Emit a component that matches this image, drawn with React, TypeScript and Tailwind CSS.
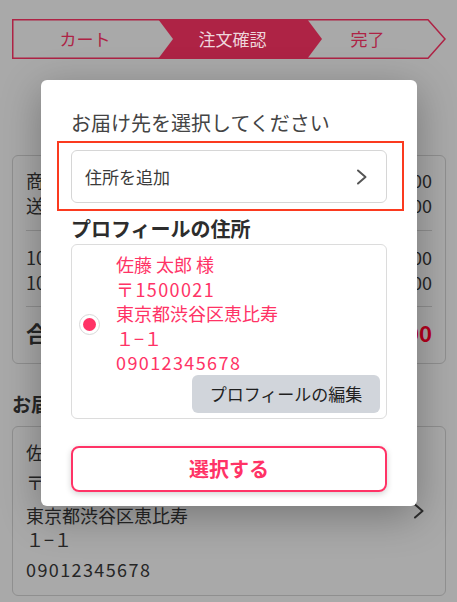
import React from 'react';

const Chevron = ({ className }: { className?: string }) => (
  <svg className={className} width="12" height="16" viewBox="0 0 12 16" fill="none">
    <polyline points="2,1.5 9.5,8 2,14.5" stroke="currentColor" strokeWidth="2" strokeLinecap="round" strokeLinejoin="round" />
  </svg>
);

function Stepper() {
  return (
    <div className="relative h-10 w-[434px]">
      <svg className="absolute inset-0" width="434" height="40" viewBox="0 0 434 40">
        <polygon points="0.75,0.75 416,0.75 433,20 416,39.25 0.75,39.25" fill="none" stroke="#ae2345" strokeWidth="1.5" />
        <polygon points="146,0 295,0 310,20 295,40 146,40 161,20" fill="#ae2345" />
      </svg>
      <div className="relative flex h-full text-[17px]">
        <div className="flex w-[146px] items-center justify-center text-[#ae2345]">カート</div>
        <div className="flex w-[149px] items-center justify-center text-[#eed6dc]">注文確認</div>
        <div className="flex w-[121px] items-center justify-center text-[#ae2345]">完了</div>
      </div>
    </div>
  );
}

function Row({ label, value }: { label: string; value: string }) {
  return (
    <div className="flex justify-between leading-[25px]">
      <span>{label}</span>
      <span>{value}</span>
    </div>
  );
}

export default function App() {
  return (
    <div className="relative h-[602px] w-[457px] overflow-hidden bg-[#a9a9a9] pl-3 pr-[11px] pt-[19px] font-['Noto_Sans_CJK_JP','Noto_Sans',sans-serif] text-[18px] text-[#262626]">
      <Stepper />

      {/* Order summary */}
      <div className="mt-[96px] rounded-md border border-[#8f8f8f] px-[13px] pb-4 pt-3">
        <Row label="商品小計" value="¥3,000" />
        <Row label="送料" value="¥1,000" />
        <div className="mt-3 h-px bg-[#8f8f8f]" />
        <div className="pt-[14px]">
          <Row label="10%対象" value="¥4,000" />
          <Row label="10%消費税" value="¥400" />
        </div>
        <div className="mt-[11px] h-px bg-[#8f8f8f]" />
        <div className="flex justify-between pt-[10px] text-[22px] font-bold leading-[30px]">
          <span>合計</span>
          <span className="text-[#b5001c]">¥4,400</span>
        </div>
      </div>

      <h2 className="mt-[27px] text-[19px] font-bold leading-[26px]">お届け先</h2>

      {/* Delivery address */}
      <div className="mt-[9px] flex items-center justify-between rounded-md border border-[#8f8f8f] pb-[14px] pl-[13px] pr-5 pt-[13px]">
        <div>
          <p className="leading-6">佐藤 太郎 様</p>
          <p className="mt-[6px] leading-6 tracking-[1.4px]">〒1500021</p>
          <p className="mt-[9px] leading-6">東京都渋谷区恵比寿</p>
          <p className="leading-6">１−１</p>
          <p className="mt-[6px] leading-6 tracking-[1.4px]">09012345678</p>
        </div>
        <Chevron className="text-[#2e2e2e]" />
      </div>

      {/* Modal */}
      <div className="absolute left-[41px] top-[80px] w-[376px] rounded-md bg-white px-[30px] pb-[14px] pt-[30px] shadow-[0_10px_40px_rgba(0,0,0,0.3)]">
        <p className="text-[20px] leading-[26px] text-[#444]">お届け先を選択してください</p>

        <button className="mt-[14px] flex h-[53px] w-full items-center justify-between rounded-md border border-[#d6d6d6] pl-[13px] pr-[18px] text-[17px] text-[#3a3a3a]">
          <span>住所を追加</span>
          <Chevron className="text-[#555]" />
        </button>

        <h3 className="mt-[13px] text-[20px] font-bold leading-[26px] text-[#2d2d2d]">プロフィールの住所</h3>

        <div className="mt-[2px] rounded-md border border-[#dcdcdc] pb-[5px] pl-[7px] pr-[6px] pt-[7px]">
          <div className="flex">
            <div className="mt-[62px] flex h-[21px] w-[21px] shrink-0 items-center justify-center rounded-full border border-[#d8d8d8]">
              <div className="h-[13px] w-[13px] rounded-full bg-[#ff3366]" />
            </div>
            <div className="ml-[16px] text-[18px] leading-[24.5px] text-[#ff3366]">
              <p>佐藤 太郎 様</p>
              <p className="tracking-[1.4px]">〒1500021</p>
              <p>東京都渋谷区恵比寿</p>
              <p>１−１</p>
              <p className="tracking-[1.4px]">09012345678</p>
            </div>
          </div>
          <div className="mt-[0.5px] flex justify-end">
            <button className="h-[38px] w-[188px] rounded-md bg-[#d1d5db] text-[17px] text-[#1f1f1f]">
              プロフィールの編集
            </button>
          </div>
        </div>

        <button className="mt-[27px] h-[46px] w-full rounded-lg border-2 border-[#ff3366] text-[20px] font-bold text-[#ff3366] shadow-[0_2px_6px_rgba(0,0,0,0.18)]">
          選択する
        </button>

        {/* highlight annotation */}
        <div className="pointer-events-none absolute left-[16px] top-[61px] h-[70px] w-[347px] border-2 border-[#fb3a1f]" />
      </div>
    </div>
  );
}
